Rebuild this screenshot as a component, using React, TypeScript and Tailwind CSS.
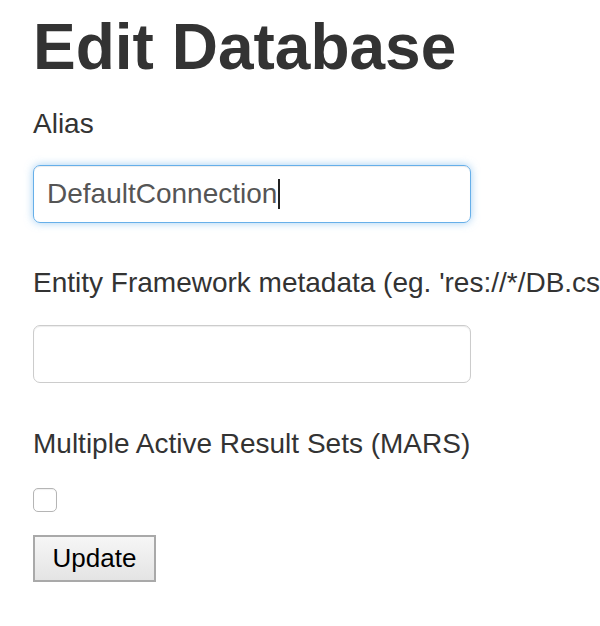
export default function App() {
  return (
    <div className="w-[600px] h-[626px] overflow-hidden bg-white text-[#333] font-['Liberation_Sans',Arial,sans-serif]">
      <div className="pl-[33px]">
        <h1 className="pt-[12px] text-[64px] leading-[70px] font-bold whitespace-nowrap">Edit Database</h1>

        <label className="block mt-[23px] text-[28px] leading-[38px] whitespace-nowrap">Alias</label>
        <div className="mt-[22px] w-[438px] h-[58px] flex items-center pl-[13px] rounded-[7px] border border-[#66afe9] shadow-[inset_0_1px_1px_rgba(0,0,0,0.075),0_0_8px_rgba(102,175,233,0.6)] text-[28px] text-[#555]">
          <span>DefaultConnection</span>
          <span className="w-[2px] h-[30px] bg-[#222] ml-[1px]" />
        </div>

        <label className="block mt-[41px] text-[28px] leading-[38px] whitespace-nowrap">
          Entity Framework metadata (eg. 'res://*/DB.csdl|res://*/DB.ssdl|res://*/DB.msl')
        </label>
        <div className="mt-[23px] w-[438px] h-[58px] rounded-[7px] border border-[#ccc] shadow-[inset_0_1px_1px_rgba(0,0,0,0.075)]" />

        <label className="block mt-[42px] text-[28px] leading-[38px] whitespace-nowrap">Multiple Active Result Sets (MARS)</label>
        <div className="mt-[25px] w-[24px] h-[24px] rounded-[5px] border border-[#b5b5b5] bg-white shadow-[inset_0_1px_1px_rgba(0,0,0,0.06)]" />

        <button className="mt-[23px] w-[123px] h-[47px] border-2 border-[#a9a9a9] bg-[linear-gradient(#f6f6f6,#e4e4e4)] text-[26px] text-black flex items-center justify-center">
          Update
        </button>
      </div>
    </div>
  );
}
